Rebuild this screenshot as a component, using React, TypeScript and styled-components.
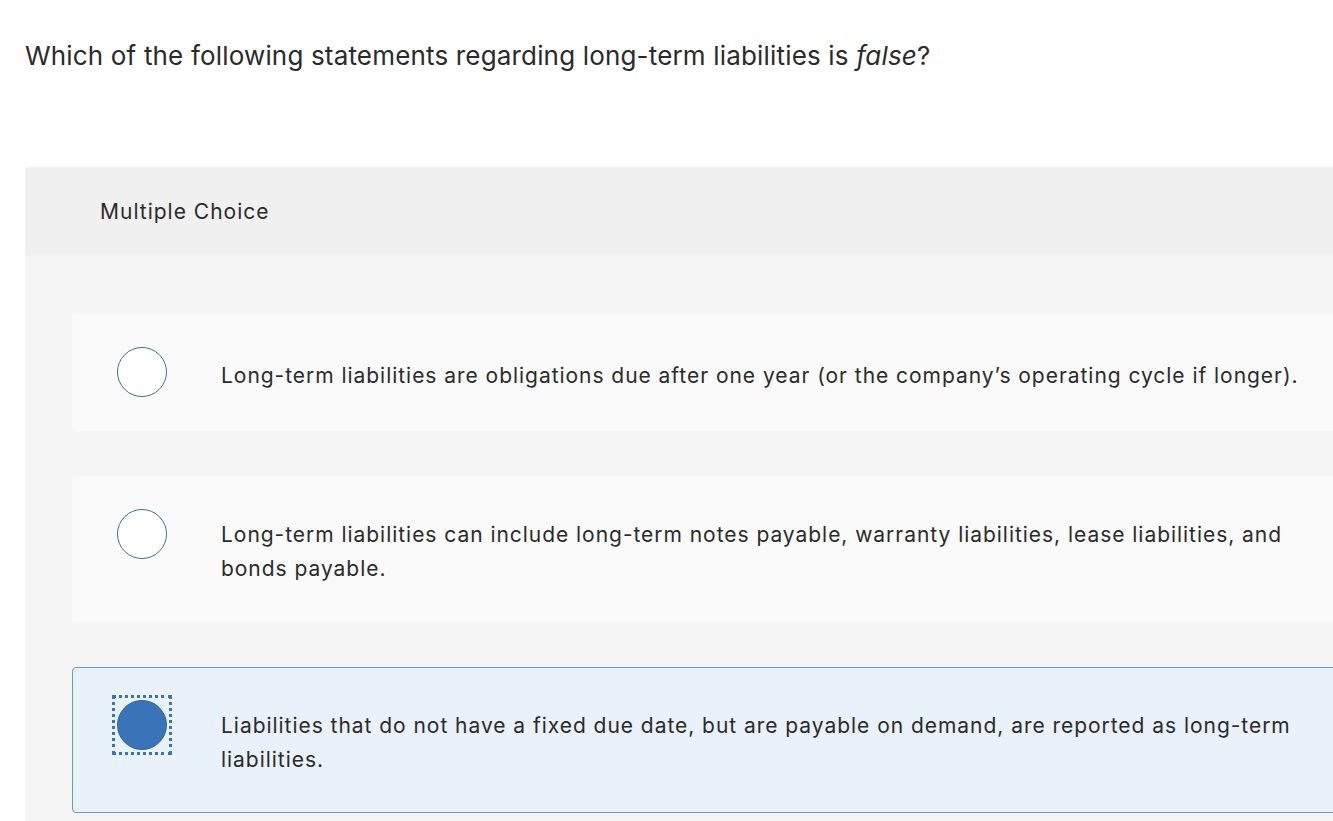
import React from "react";
import styled, { createGlobalStyle } from "styled-components";

const Global = createGlobalStyle`
  html, body { margin: 0; padding: 0; background: #ffffff; overflow: hidden; }
  body { font-family: "Inter", "Open Sans", sans-serif; color: #2b2b2b; font-variant-ligatures: none; }
`;

const Page = styled.div`
  padding: 38px 0 0 25px;
  width: 1450px;
`;

const Question = styled.p`
  margin: 0;
  font-size: 26px;
  line-height: 36px;
  letter-spacing: 0.17px;
  color: #2b2b2b;
  em { font-style: italic; }
`;

const Panel = styled.section`
  margin-top: 93px;
  border-radius: 4px 0 0 0;
  overflow: hidden;
  background: #f5f5f5;
`;

const PanelHeader = styled.div`
  height: 88px;
  background: #f0f0f0;
  display: flex;
  align-items: center;
  padding-left: 75px;
  font-size: 21px;
  letter-spacing: 1px;
  color: #2b2b2b;
`;

const Choices = styled.div`
  padding: 59px 0 20px 47px;
  display: flex;
  flex-direction: column;
  gap: 45px;
`;

const Card = styled.label<{ $selected?: boolean }>`
  display: flex;
  align-items: flex-start;
  gap: 54px;
  padding: 41px 0 35px 44px;
  border-radius: 4px 0 0 4px;
  background: ${(p) => (p.$selected ? "#e9f1fb" : "#fafafa")};
  border: 1px solid ${(p) => (p.$selected ? "#6d98cd" : "transparent")};
`;

const RadioFocus = styled.span<{ $focused?: boolean }>`
  flex: none;
  width: 50px;
  height: 50px;
  margin: -9px 0 -7px;
  display: flex;
  outline: ${(p) => (p.$focused ? "3px dotted #3a74b8" : "none")};
  outline-offset: 2px;
`;

const Radio = styled.span<{ $selected?: boolean }>`
  width: 50px;
  height: 50px;
  box-sizing: border-box;
  border-radius: 50%;
  border: 1.5px solid ${(p) => (p.$selected ? "#2f64a3" : "#3c6fa8")};
  background: ${(p) => (p.$selected ? "#3a74b8" : "#ffffff")};
`;

const ChoiceText = styled.span`
  min-height: 39px;
  width: 1112px;
  display: flex;
  align-items: center;
  font-size: 21px;
  line-height: 34px;
  letter-spacing: 0.96px;
  color: #2b2b2b;
`;

const choices = [
  "Long-term liabilities are obligations due after one year (or the company’s operating cycle if longer).",
  "Long-term liabilities can include long-term notes payable, warranty liabilities, lease liabilities, and bonds payable.",
  "Liabilities that do not have a fixed due date, but are payable on demand, are reported as long-term liabilities.",
];

export default function App() {
  return (
    <>
      <Global />
      <Page>
        <Question>
          Which of the following statements regarding long-term liabilities is <em>false</em>?
        </Question>
        <Panel>
          <PanelHeader>Multiple Choice</PanelHeader>
          <Choices>
            {choices.map((c, i) => (
              <Card key={i} $selected={i === 2}>
                <RadioFocus $focused={i === 2}>
                  <Radio $selected={i === 2} />
                </RadioFocus>
                <ChoiceText>{c}</ChoiceText>
              </Card>
            ))}
          </Choices>
        </Panel>
      </Page>
    </>
  );
}
